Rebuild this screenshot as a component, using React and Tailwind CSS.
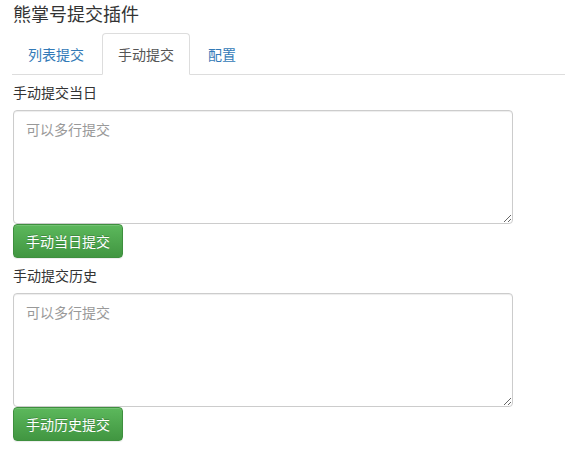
import { useState } from "react";

const tabs = ["列表提交", "手动提交", "配置"];

function SubmitBlock({ label, button }) {
    const [text, setText] = useState("");
    return (
        <div>
            <label className="block mt-[7px] mb-[8px] text-[14px] leading-[20px] text-[#333]">{label}</label>
            <textarea
                value={text}
                onChange={(e) => setText(e.target.value)}
                placeholder="可以多行提交"
                className="block w-[500px] h-[114px] resize px-[12px] pt-[8px] text-[14px] leading-[20px] text-[#555] placeholder:text-[#999] border border-[#ccc] rounded-[4px] shadow-[inset_0_1px_1px_rgba(0,0,0,0.075)] outline-none"
            />
            <button
                type="button"
                className="block h-[34px] px-[12px] text-[14px] leading-[20px] text-white rounded-[4px] border border-[#3e8f3e] bg-gradient-to-b from-[#5cb85c] to-[#419641] shadow-[inset_0_1px_0_rgba(255,255,255,0.15),0_1px_1px_rgba(0,0,0,0.075)] [text-shadow:0_-1px_0_rgba(0,0,0,0.2)]"
            >
                {button}
            </button>
        </div>
    );
}

export default function App() {
    const [active, setActive] = useState(1);

    return (
        <div className="min-h-screen bg-white pl-[13px] font-['Noto_Sans_CJK_SC','Noto_Sans',sans-serif] text-[#333]">
            <h1 className="text-[18px] leading-[26px] font-normal text-[#333]">熊掌号提交插件</h1>
            <ul className="flex mt-[7px] ml-[-1px] border-b border-[#ddd]">
                {tabs.map((t, i) => (
                    <li key={t} className="mr-[2px] -mb-px">
                        <button
                            type="button"
                            onClick={() => setActive(i)}
                            className={
                                i === active
                                    ? "block h-[42px] px-[15px] text-[14px] leading-[20px] text-[#555] bg-white border border-[#ddd] border-b-white rounded-t-[4px]"
                                    : "block h-[42px] px-[15px] text-[14px] leading-[20px] text-[#337ab7] border border-transparent rounded-t-[4px]"
                            }
                        >
                            {t}
                        </button>
                    </li>
                ))}
            </ul>
            <SubmitBlock label="手动提交当日" button="手动当日提交" />
            <SubmitBlock label="手动提交历史" button="手动历史提交" />
        </div>
    );
}
